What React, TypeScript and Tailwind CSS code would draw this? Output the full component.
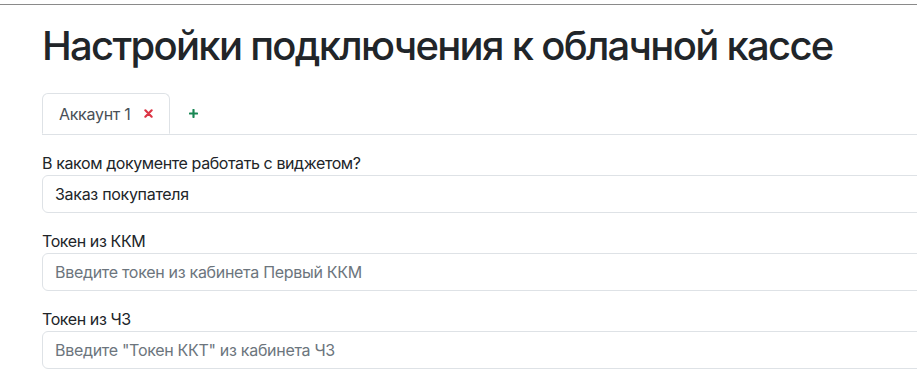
import React from "react";

const font = { fontFamily: "Inter, 'Noto Sans', 'Liberation Sans', sans-serif" };

function Cross() {
  return (
    <svg width="9" height="9" viewBox="0 0 10 10" className="inline-block">
      <path d="M1.5 1.5 L8.5 8.5 M8.5 1.5 L1.5 8.5" stroke="#dc3545" strokeWidth="2.4" strokeLinecap="round" />
    </svg>
  );
}

function Plus() {
  return (
    <svg width="9" height="9" viewBox="0 0 10 10" className="inline-block">
      <path d="M5 1 L5 9 M1 5 L9 5" stroke="#198754" strokeWidth="2.4" strokeLinecap="round" />
    </svg>
  );
}

function Field({ label, value, placeholder }: { label: string; value?: string; placeholder?: string }) {
  return (
    <div className="mb-4">
      <label className="block text-[16px] leading-6 text-[#212529] mb-0 tracking-[-0.4px]">{label}</label>
      <input
        readOnly
        value={value ?? ""}
        placeholder={placeholder}
        className="block w-full h-[38px] px-3 py-1.5 text-[16px] leading-6 tracking-[-0.3px] text-[#212529] bg-white border border-[#dee2e6] rounded-[6px] placeholder:text-[#6c757d] outline-none"
        style={font}
      />
    </div>
  );
}

export default function App() {
  return (
    <div className="w-[917px] h-[375px] overflow-hidden bg-white" style={font}>
      <div className="h-[4px]" />
      <div className="h-px bg-[#8a8a8a]" />
      <div className="pl-[42px] w-[1000px]">
        <h1 className="mt-[17px] mb-[23px] text-[40px] leading-[48px] font-medium text-[#212529] tracking-[-1.7px]">
          Настройки подключения к облачной кассе
        </h1>
        <div className="flex border-b border-[#dee2e6]">
          <div className="-mb-px flex items-center gap-[14px] pl-4 pr-[16px] h-[41px] border border-[#dee2e6] border-b-white rounded-t-[6px] bg-white text-[16px] text-[#495057] tracking-[-0.3px]">
            <span>Аккаунт 1</span>
            <Cross />
          </div>
          <div className="flex items-center px-[19px] h-[41px]">
            <Plus />
          </div>
        </div>
        <div className="pt-[16px]">
          <Field label="В каком документе работать с виджетом?" value="Заказ покупателя" />
          <Field label="Токен из ККМ" placeholder="Введите токен из кабинета Первый ККМ" />
          <Field label="Токен из ЧЗ" placeholder='Введите "Токен ККТ" из кабинета ЧЗ' />
        </div>
      </div>
    </div>
  );
}
